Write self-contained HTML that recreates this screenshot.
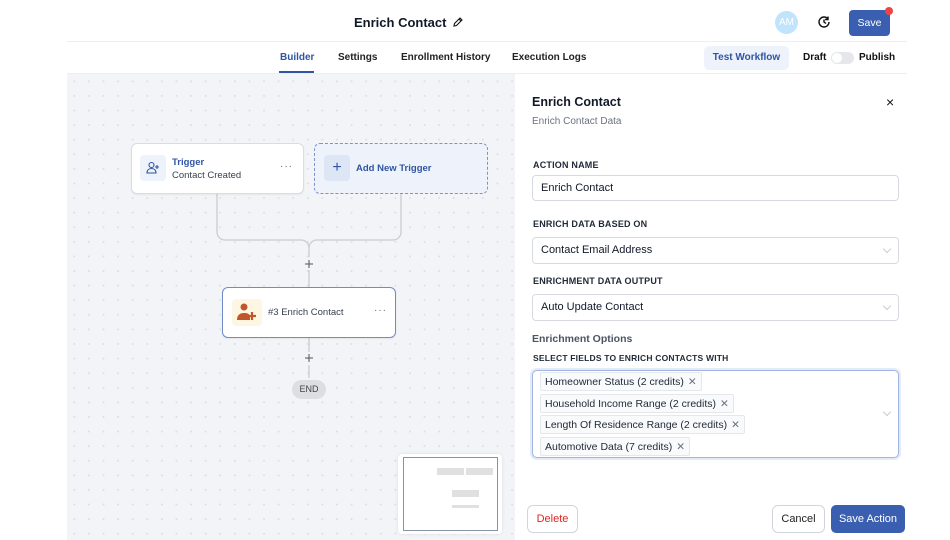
<!DOCTYPE html>
<html><head><meta charset="utf-8">
<style>
*{box-sizing:border-box;margin:0;padding:0}
body{width:950px;height:540px;overflow:hidden;background:#fff;font-family:"Liberation Sans",sans-serif;color:#111827;position:relative}
.abs{position:absolute}
.hdr{left:67px;top:41px;width:840px;height:1px;background:#eceef2}
.tabs{left:67px;top:73px;width:840px;height:1px;background:#eceef2}
.canvas{left:67px;top:74px;width:448px;height:466px;background-color:#f3f4f7;background-image:radial-gradient(#dcdfe5 0.9px,transparent 1.1px);background-size:14.6px 14.6px}
.card{background:#fff;border:1px solid #d9dce2;border-radius:6px;box-shadow:0 1px 2px rgba(0,0,0,.06)}
.lbl{font-size:9px;font-weight:bold;color:#1f2937;letter-spacing:.2px}
.inp{left:532px;width:367px;height:26px;border:1px solid #d7dbe1;border-radius:4px;font-size:11px;padding:6px 8px;color:#111827}
.chev{position:absolute;right:8px;top:8px;width:6px;height:6px;border-right:1px solid #c7cbd2;border-bottom:1px solid #c7cbd2;transform:rotate(45deg)}
.tag{position:absolute;left:540px;height:19px;border:1px solid #e5e7eb;background:#f9fafb;border-radius:2px;font-size:10.5px;padding:3px 4px;color:#1f2937;white-space:nowrap}
.tag span{color:#6b7280;margin-left:4px}
.btn{border:1px solid #d1d5db;border-radius:6px;font-size:11px;text-align:center;background:#fff}
.tb{font-size:10px;font-weight:bold;color:#222;top:52px}
</style></head><body>
<div class="abs" style="left:354px;top:15px;font-size:13px;font-weight:bold">Enrich Contact</div>
<svg class="abs" style="left:452px;top:16px" width="12" height="12" viewBox="0 0 12 12"><path d="M2 10l.5-2.5L8 2l2 2-5.5 5.5z M7 3l2 2" fill="none" stroke="#111" stroke-width="1.1"/></svg>
<div class="abs" style="left:775px;top:11px;width:23px;height:23px;border-radius:50%;background:#bfe4fb;color:#fff;font-size:10px;text-align:center;line-height:23px">AM</div>
<svg class="abs" style="left:817px;top:15px" width="14" height="14" viewBox="0 0 14 14"><path d="M12 7A5 5 0 1 1 7 2a5 5 0 0 1 4 2M11 1.5V4.5H8M7 4.5V7l2 1.5" fill="none" stroke="#111" stroke-width="1.4"/></svg>
<div class="abs" style="left:849px;top:10px;width:41px;height:26px;background:#3b5fb0;border-radius:4px;color:#fff;font-size:10.5px;text-align:center;line-height:26px">Save</div>
<div class="abs" style="left:885px;top:7px;width:8px;height:8px;border-radius:50%;background:#ef4444"></div>
<div class="abs hdr"></div>
<div class="abs tb" style="left:280px;color:#2f55a4">Builder</div>
<div class="abs" style="left:279px;top:71px;width:35px;height:2px;background:#2f55a4"></div>
<div class="abs tb" style="left:338px">Settings</div>
<div class="abs tb" style="left:401px">Enrollment History</div>
<div class="abs tb" style="left:512px">Execution Logs</div>
<div class="abs" style="left:704px;top:46px;width:85px;height:24px;background:#eef2fa;border-radius:5px;color:#2f55a4;font-size:10px;font-weight:bold;text-align:center;line-height:24px">Test Workflow</div>
<div class="abs tb" style="left:803px;color:#111">Draft</div>
<div class="abs" style="left:831px;top:52px;width:23px;height:12px;border-radius:6px;background:#e5e7eb"><div style="position:absolute;left:1px;top:1px;width:10px;height:10px;border-radius:50%;background:#fff"></div></div>
<div class="abs tb" style="left:859px;color:#111">Publish</div>
<div class="abs tabs"></div>
<div class="abs canvas"></div>
<svg class="abs" style="left:200px;top:190px" width="220" height="210" viewBox="0 0 220 210"><path d="M17 4V42a8 8 0 0 0 8 8H101a8 8 0 0 1 8 8M201 4V42a8 8 0 0 1-8 8H117a8 8 0 0 0-8 8V67M109 80V97M109 148V162M109 175V188" fill="none" stroke="#c8ccd2" stroke-width="1.3"/><path d="M105 74h8M109 70v8M105 168h8M109 164v8" stroke="#555" stroke-width="1"/></svg>
<div class="abs card" style="left:131px;top:143px;width:173px;height:51px"></div>
<div class="abs" style="left:140px;top:155px;width:26px;height:26px;background:#eef2fa;border-radius:4px"></div>
<svg class="abs" style="left:146px;top:161px" width="14" height="14" viewBox="0 0 14 14"><circle cx="5.5" cy="4" r="2.5" fill="none" stroke="#2f55a4" stroke-width="1.1"/><path d="M1 12c0-3 2-4.5 4.5-4.5S10 9 10 12zM11 4v4M9 6h4" fill="none" stroke="#2f55a4" stroke-width="1.1"/></svg>
<div class="abs" style="left:172px;top:157px;font-size:9.5px;font-weight:bold;color:#2f55a4">Trigger</div>
<div class="abs" style="left:172px;top:170px;font-size:9.5px;color:#374151">Contact Created</div>
<div class="abs" style="left:280px;top:161px;font-size:10px;color:#666;letter-spacing:1px">···</div>
<div class="abs" style="left:314px;top:143px;width:174px;height:51px;border:1px dashed #7b93c9;border-radius:6px;background:#eef2fa"></div>
<div class="abs" style="left:324px;top:155px;width:26px;height:26px;background:#dce6f5;border-radius:4px;color:#2f55a4;font-size:16px;text-align:center;line-height:26px">+</div>
<div class="abs" style="left:356px;top:163px;font-size:9.5px;font-weight:bold;color:#2f55a4">Add New Trigger</div>
<div class="abs card" style="left:222px;top:287px;width:174px;height:51px;border-color:#6f8bc8"></div>
<div class="abs" style="left:232px;top:299px;width:30px;height:27px;background:#fdf6e3;border-radius:4px"></div>
<svg class="abs" style="left:236px;top:302px" width="22" height="20" viewBox="0 0 22 20"><circle cx="8" cy="5" r="3.5" fill="#c0562b"/><path d="M1 18c0-5 3-7 7-7s5 1 6 3v4z" fill="#c0562b"/><path d="M16 10v8M12 14h8" stroke="#c0562b" stroke-width="2.2"/></svg>
<div class="abs" style="left:268px;top:307px;font-size:9.5px;color:#374151">#3 Enrich Contact</div>
<div class="abs" style="left:374px;top:305px;font-size:10px;color:#666;letter-spacing:1px">···</div>
<div class="abs" style="left:292px;top:380px;width:34px;height:19px;border-radius:10px;background:#dcdee3;font-size:9px;color:#444;text-align:center;line-height:19px">END</div>
<div class="abs" style="left:398px;top:454px;width:104px;height:80px;background:#fff;border-radius:4px;box-shadow:0 0 3px rgba(0,0,0,.1)"></div>
<div class="abs" style="left:403px;top:457px;width:95px;height:74px;border:1px solid #8a93a6"></div>
<div class="abs" style="left:437px;top:468px;width:27px;height:7px;background:#e0e0e0"></div>
<div class="abs" style="left:466px;top:468px;width:27px;height:7px;background:#e0e0e0"></div>
<div class="abs" style="left:452px;top:490px;width:27px;height:7px;background:#e0e0e0"></div>
<div class="abs" style="left:452px;top:505px;width:27px;height:3px;background:#e0e0e0"></div>
<div class="abs" style="left:532px;top:95px;font-size:12.5px;font-weight:bold">Enrich Contact</div>
<div class="abs" style="left:532px;top:116px;font-size:10px;color:#6b7280">Enrich Contact Data</div>
<div class="abs" style="left:886px;top:94px;font-size:14px;color:#111">×</div>
<div class="abs lbl" style="left:533px;top:160px">ACTION NAME</div>
<div class="abs inp" style="top:175px">Enrich Contact</div>
<div class="abs lbl" style="left:533px;top:219px">ENRICH DATA BASED ON</div>
<div class="abs inp" style="top:237px;height:27px">Contact Email Address<div class="chev"></div></div>
<div class="abs lbl" style="left:533px;top:276px">ENRICHMENT DATA OUTPUT</div>
<div class="abs inp" style="top:294px;height:27px">Auto Update Contact<div class="chev"></div></div>
<div class="abs" style="left:532px;top:333px;font-size:10.5px;font-weight:bold;color:#4b5563">Enrichment Options</div>
<div class="abs lbl" style="left:533px;top:353px;font-size:8.5px">SELECT FIELDS TO ENRICH CONTACTS WITH</div>
<div class="abs" style="left:532px;top:370px;width:367px;height:88px;border:1px solid #9fb4e0;border-radius:5px;box-shadow:0 0 0 2px #e3eaf8"><div class="chev" style="top:38px"></div></div>
<div class="tag" style="top:372px">Homeowner Status (2 credits)<span>✕</span></div>
<div class="tag" style="top:394px">Household Income Range (2 credits)<span>✕</span></div>
<div class="tag" style="top:415px">Length Of Residence Range (2 credits)<span>✕</span></div>
<div class="tag" style="top:437px">Automotive Data (7 credits)<span>✕</span></div>
<div class="abs btn" style="left:527px;top:505px;width:51px;height:28px;line-height:26px;color:#dc2626">Delete</div>
<div class="abs btn" style="left:772px;top:505px;width:53px;height:28px;line-height:26px;color:#222">Cancel</div>
<div class="abs" style="left:831px;top:505px;width:74px;height:28px;background:#3b5fb0;border-radius:5px;color:#fff;font-size:11px;text-align:center;line-height:28px">Save Action</div>
</body></html>
